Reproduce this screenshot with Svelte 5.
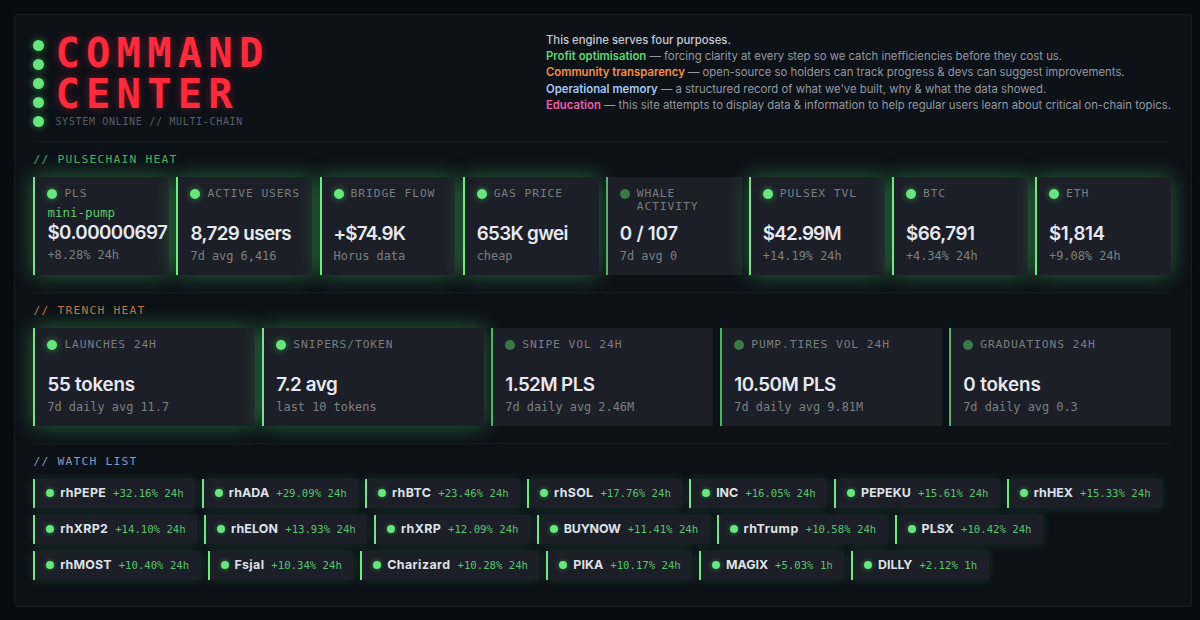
<script>
	const pulse = [
		{ label: 'PLS', note: 'mini-pump', value: '$0.00000697', width: 120, sub: '+8.28% 24h', hot: true },
		{ label: 'ACTIVE USERS', value: '8,729 users', width: 100.5, sub: '7d avg 6,416', hot: true },
		{ label: 'BRIDGE FLOW', value: '+$74.9K', width: 71.5, sub: 'Horus data', hot: true },
		{ label: 'GAS PRICE', value: '653K gwei', width: 91, sub: 'cheap', hot: true },
		{ label: 'WHALE ACTIVITY', value: '0 / 107', width: 58, sub: '7d avg 0', hot: false },
		{ label: 'PULSEX TVL', value: '$42.99M', width: 78, sub: '+14.19% 24h', hot: true },
		{ label: 'BTC', value: '$66,791', width: 68.5, sub: '+4.34% 24h', hot: true },
		{ label: 'ETH', value: '$1,814', width: 55.5, sub: '+9.08% 24h', hot: true }
	];

	const trench = [
		{ label: 'LAUNCHES 24H', value: '55 tokens', width: 87.5, sub: '7d daily avg 11.7', hot: true },
		{ label: 'SNIPERS/TOKEN', value: '7.2 avg', width: 61, sub: 'last 10 tokens', hot: true },
		{ label: 'SNIPE VOL 24H', value: '1.52M PLS', width: 89, sub: '7d daily avg 2.46M', hot: false },
		{ label: 'PUMP.TIRES VOL 24H', value: '10.50M PLS', width: 101.5, sub: '7d daily avg 9.81M', hot: false },
		{ label: 'GRADUATIONS 24H', value: '0 tokens', width: 77.5, sub: '7d daily avg 0.3', hot: false }
	];

	const sections = [
		{ title: 'PULSECHAIN HEAT', tone: 'green', cards: pulse },
		{ title: 'TRENCH HEAT', tone: 'orange', cards: trench }
	];

	const watchRows = [
		[
			{ name: 'rhPEPE', width: 45.9, change: '+32.16% 24h' },
			{ name: 'rhADA', width: 40.4, change: '+29.09% 24h' },
			{ name: 'rhBTC', width: 39.3, change: '+23.46% 24h' },
			{ name: 'rhSOL', width: 39.3, change: '+17.76% 24h' },
			{ name: 'INC', width: 22.1, change: '+16.05% 24h' },
			{ name: 'PEPEKU', width: 50, change: '+15.61% 24h' },
			{ name: 'rhHEX', width: 39.3, change: '+15.33% 24h' }
		],
		[
			{ name: 'rhXRP2', width: 48, change: '+14.10% 24h' },
			{ name: 'rhELON', width: 47.3, change: '+13.93% 24h' },
			{ name: 'rhXRP', width: 40, change: '+12.09% 24h' },
			{ name: 'BUYNOW', width: 56.9, change: '+11.41% 24h' },
			{ name: 'rhTrump', width: 55.3, change: '+10.58% 24h' },
			{ name: 'PLSX', width: 32.5, change: '+10.42% 24h' }
		],
		[
			{ name: 'rhMOST', width: 51.5, change: '+10.40% 24h' },
			{ name: 'Fsjal', width: 29.9, change: '+10.34% 24h' },
			{ name: 'Charizard', width: 63.4, change: '+10.28% 24h' },
			{ name: 'PIKA', width: 30, change: '+10.17% 24h' },
			{ name: 'MAGIX', width: 42, change: '+5.03% 1h' },
			{ name: 'DILLY', width: 34.4, change: '+2.12% 1h' }
		]
	];

	const purposes = [
		{ name: 'Profit optimisation', tone: 'green', text: 'forcing clarity at every step so we catch inefficiencies before they cost us.' },
		{ name: 'Community transparency', tone: 'orange', text: 'open-source so holders can track progress & devs can suggest improvements.' },
		{ name: 'Operational memory', tone: 'blue', text: "a structured record of what we've built, why & what the data showed." },
		{ name: 'Education', tone: 'pink', text: 'this site attempts to display data & information to help regular users learn about critical on-chain topics.' }
	];

	// Adjust the tracking so the text takes up the given width
	function fit(node, width) {
		const natural = node.getBoundingClientRect().width;
		node.style.letterSpacing = (width - natural) / node.textContent.length + 'px';
	}
</script>

<main>
	<header>
		<div class="brand">
			<div class="leds">
				{#each Array(5) as _}
					<span class="dot"></span>
				{/each}
			</div>
			<div>
				<h1>COMMAND<br />CENTER</h1>
				<p class="status">SYSTEM ONLINE // MULTI-CHAIN</p>
			</div>
		</div>
		<div class="intro">
			<p class="lead">This engine serves four purposes.</p>
			{#each purposes as p}
				<p><strong class={p.tone}>{p.name}</strong> — {p.text}</p>
			{/each}
		</div>
	</header>

	{#each sections as section}
		<section>
			<h2 class={section.tone}>// {section.title}</h2>
			<div class="cards">
				{#each section.cards as card}
					<div class="card" class:hot={card.hot} class:noted={card.note}>
						<div class="label">
							<span class="dot"></span>
							<span>{card.label}</span>
						</div>
						{#if card.note}
							<div class="note">{card.note}</div>
						{/if}
						<div class="value"><span use:fit={card.width}>{card.value}</span></div>
						<div class="sub">{card.sub}</div>
					</div>
				{/each}
			</div>
		</section>
	{/each}

	<section>
		<h2 class="blue">// WATCH LIST</h2>
		<div class="watch">
			{#each watchRows as row}
				<div class="row">
					{#each row as token}
						<div class="chip">
							<span class="dot"></span>
							<span class="name" use:fit={token.width}>{token.name}</span>
							<span class="change">{token.change}</span>
						</div>
					{/each}
				</div>
			{/each}
		</div>
	</section>
</main>

<style>
	:global(body) {
		background: #080b12;
		overflow: hidden;
	}

	main {
		box-sizing: border-box;
		width: 1178px;
		height: 593px;
		margin: 14px 0 0 13.5px;
		padding: 18px 19.5px 0 18.9px;
		border: 1px solid #171b22;
		border-radius: 3px;
		background: #0d1118;
		font-family: 'DejaVu Sans Mono', monospace;
	}

	h1,
	h2,
	p {
		margin: 0;
	}

	header {
		display: flex;
		justify-content: space-between;
		height: 108px;
	}

	.brand {
		display: flex;
		gap: 11px;
	}

	.leds {
		display: flex;
		flex-direction: column;
		gap: 8px;
		padding-top: 6.5px;
	}

	.dot {
		flex: none;
		width: 10px;
		height: 10px;
		border-radius: 50%;
		background: #69e57d;
		box-shadow: 0 0 7px rgba(74, 222, 100, 0.6);
	}

	.leds .dot {
		width: 11px;
		height: 11px;
	}

	h1 {
		color: #ff2a3c;
		font-size: 40.5px;
		line-height: 41px;
		letter-spacing: 6.2px;
		text-shadow: 0 0 9px rgba(255, 30, 50, 0.4);
	}

	.status {
		color: #5b5f63;
		font-size: 10px;
		line-height: 13px;
		letter-spacing: 0.68px;
	}

	.intro {
		margin-top: -1.5px;
		color: #9499a1;
		font-family: Inter, sans-serif;
		font-size: 11.34px;
		line-height: 16.4px;
		white-space: nowrap;
	}

	.lead {
		color: #c6cad1;
		font-weight: 500;
	}

	strong {
		font-weight: 600;
	}

	.green {
		color: #5fd873;
	}

	.orange {
		color: #f58f45;
	}

	.blue {
		color: #a3c8fa;
	}

	.pink {
		color: #ee5fa9;
	}

	section {
		height: 150px;
		border-top: 1px solid #151a21;
	}

	h2 {
		padding-top: 10px;
		font-size: 11.3px;
		font-weight: 400;
		line-height: 16px;
		letter-spacing: 1.2px;
	}

	h2.green {
		color: #4fae60;
	}

	h2.orange {
		color: #c07442;
	}

	h2.blue {
		color: #819dc4;
	}

	.cards {
		display: flex;
		gap: 7.2px;
		padding-top: 9px;
	}

	.card {
		box-sizing: border-box;
		flex: 1 1 0;
		min-width: 0;
		height: 98px;
		padding: 10px 0 0 12px;
		border-left: 2px solid #4cb562;
		background: #1c1f27;
	}

	.card.hot {
		border-left-color: #71e684;
		box-shadow: 0 0 20px rgba(74, 200, 95, 0.46);
	}

	.card:not(.hot) .dot {
		background: #397947;
		box-shadow: none;
	}

	.label {
		display: flex;
		gap: 7px;
		height: 35px;
		color: #787d7e;
		font-size: 11.3px;
		line-height: 13px;
		letter-spacing: 0.9px;
	}

	.label .dot {
		margin-top: 2px;
	}

	.noted .label {
		height: 17px;
	}

	.note {
		height: 17px;
		color: #5bcb6f;
		font-size: 12.5px;
		line-height: 17px;
	}

	.value {
		color: #e7e9f2;
		font-family: Inter, sans-serif;
		font-size: 18.8px;
		font-weight: 600;
		line-height: 24px;
		white-space: nowrap;
	}

	.sub {
		color: #7b807f;
		font-size: 11.9px;
		line-height: 20px;
		white-space: nowrap;
	}

	.watch {
		display: flex;
		flex-direction: column;
		gap: 7.2px;
		padding-top: 8.5px;
	}

	.row {
		display: flex;
		gap: 7px;
	}

	.chip {
		box-sizing: border-box;
		display: flex;
		align-items: center;
		height: 29px;
		padding: 0 11.5px 0 11px;
		border-left: 2px solid #71e684;
		background: #1c1f27;
		box-shadow: 0 0 11px rgba(74, 200, 110, 0.16);
		white-space: nowrap;
	}

	.chip .dot {
		width: 8px;
		height: 8px;
		margin-right: 5.8px;
		box-shadow: 0 0 5px rgba(74, 222, 100, 0.5);
	}

	.name {
		margin-right: 7px;
		padding-bottom: 1px;
		color: #dfe2e9;
		font-family: Inter, sans-serif;
		font-size: 12.4px;
		font-weight: 700;
	}

	.change {
		color: #59c46c;
		font-size: 10.65px;
	}
</style>
